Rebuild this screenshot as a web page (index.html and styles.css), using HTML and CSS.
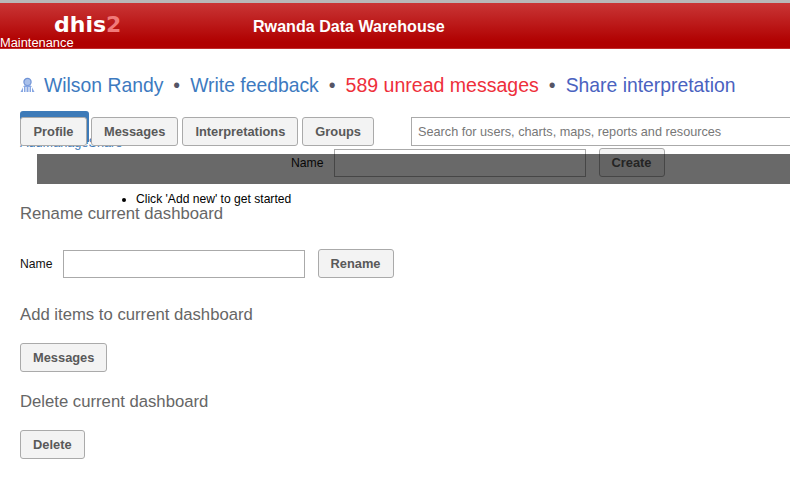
FILE: index.html
```html
<!DOCTYPE html>
<html lang="en">
<head>
    <meta charset="UTF-8">
    <title>Dashboard</title>
    <link rel="stylesheet" href="styles.css">
</head>
<body>
    <div class="header">
        <div class="logo">dhis<span class="logo-two">2</span></div>
        <div class="app-title">Rwanda Data Warehouse</div>
        <div class="maintenance">Maintenance</div>
    </div>

    <div class="interpretation-bar">
        <svg class="user-icon" width="15" height="16" viewBox="0 0 15 16">
            <circle cx="7.5" cy="5" r="3.6" fill="#a9c0ea" stroke="#6f93d6" stroke-width="1.2"/>
            <path d="M4 8.5h7l3.5 6.5h-14z" fill="#86a6e2"/>
            <path d="M3.5 10v5M6 10v5M9 10v5M11.5 10v5" stroke="#fff" stroke-width="1"/>
        </svg>
        <a class="link" href="#">Wilson Randy</a>
        <span class="sep">•</span>
        <a class="link" href="#">Write feedback</a>
        <span class="sep">•</span>
        <a class="link-red" href="#">589 unread messages</a>
        <span class="sep">•</span>
        <a class="link-purple" href="#">Share interpretation</a>
    </div>

    <div class="toolbar">
        <div class="tabs">
            <div class="tab-back"></div>
            <button class="button tab-button tab-active">Profile</button>
            <button class="button tab-button">Messages</button>
            <button class="button tab-button">Interpretations</button>
            <button class="button tab-button">Groups</button>
        </div>
        <input class="search" type="text" placeholder="Search for users, charts, maps, reports and resources">
    </div>

    <div class="hidden-links">Add<span>Manage</span><span>Share</span></div>

    <div class="create-form">
        <span class="small-label">Name</span>
        <input class="text-input" type="text">
        <button class="button">Create</button>
    </div>
    <div class="mask"></div>

    <ul class="hint">
        <li>Click 'Add new' to get started</li>
    </ul>

    <div class="content">
        <h3 class="section-title rename-title">Rename current dashboard</h3>
        <div class="form-row">
            <span class="small-label">Name</span>
            <input class="text-input" type="text">
            <button class="button">Rename</button>
        </div>

        <h3 class="section-title">Add items to current dashboard</h3>
        <button class="button">Messages</button>

        <h3 class="section-title">Delete current dashboard</h3>
        <button class="button">Delete</button>
    </div>
</body>
</html>
```

FILE: styles.css
```css
* {
    box-sizing: border-box;
}

html, body {
    overflow: hidden;
}

body {
    margin: 0;
    height: 485px;
    background: #fff;
    font-family: "Liberation Sans", Arial, sans-serif;
    position: relative;
}

.header {
    display: flex;
    align-items: center;
    height: 49px;
    position: relative;
    border-top: 3px solid #b9b9b9;
    background: linear-gradient(to bottom, #c93636 0%, #b00000 85%, #b00000 97%, #c44 100%);
    color: #fff;
}

.logo {
    width: 66px;
    margin-left: 54px;
    margin-bottom: 3px;
    font-family: "DejaVu Sans", sans-serif;
    font-size: 22px;
    font-weight: bold;
    line-height: 30px;
}

.logo-two {
    color: #f07a7a;
}

.app-title {
    margin-left: 133px;
    margin-bottom: 1px;
    font-size: 16.1px;
    font-weight: bold;
    line-height: 18px;
}

.maintenance {
    position: absolute;
    left: 0;
    top: 32px;
    font-size: 12.85px;
    line-height: 15px;
}

.interpretation-bar {
    display: flex;
    align-items: center;
    height: 30px;
    margin-top: 21px;
    padding-left: 20px;
    font-size: 19.35px;
}

.user-icon {
    margin-right: 9px;
}

.sep {
    margin: 0 10px;
    color: #556;
}

.link {
    color: #3d7ac0;
    text-decoration: none;
}

.link-red {
    color: #ee2f3b;
    font-size: 19.55px;
    text-decoration: none;
}

.link-purple {
    color: #4a62c0;
    text-decoration: none;
}

.toolbar {
    display: flex;
    margin-top: 17px;
    padding-left: 20px;
    height: 29px;
}

.tabs {
    display: flex;
    flex-shrink: 0;
    gap: 4px;
    position: relative;
    width: 391px;
}

.tab-back {
    position: absolute;
    left: 0;
    top: -6px;
    width: 69px;
    height: 31px;
    background: #3d7ab8;
    border-radius: 3px 3px 0 0;
}

.button {
    height: 29px;
    padding: 0 12px;
    background: #f3f3f3;
    border: 1px solid #aaa;
    border-radius: 3px;
    color: #595959;
    font-family: "Liberation Sans", Arial, sans-serif;
    font-size: 12.85px;
    font-weight: bold;
}

.tab-button {
    position: relative;
}

.tab-active {
    padding: 0 12.5px;
}

.search {
    width: 400px;
    height: 29px;
    padding: 0 6px;
    border: 1px solid #aaa;
    font-family: "Liberation Sans", Arial, sans-serif;
    font-size: 12.7px;
    flex-shrink: 0;
}

.search::placeholder {
    color: #777;
    opacity: 1;
}

.hidden-links {
    position: absolute;
    left: 20px;
    top: 136px;
    font-size: 12.7px;
    line-height: 14px;
    color: #3d7ab8;
    z-index: -1;
}

.create-form {
    display: flex;
    align-items: center;
    height: 29px;
    margin-top: 2px;
    padding-left: 291px;
}

.create-form .small-label {
    margin-right: 10px;
    margin-top: 1px;
}

.create-form .text-input {
    margin-right: 13px;
}

.mask {
    position: absolute;
    left: 37px;
    top: 154px;
    right: 0;
    height: 30px;
    background: rgba(0, 0, 0, 0.59);
}

.small-label {
    font-size: 12.2px;
    color: #111;
}

.text-input {
    width: 252px;
    height: 28px;
    border: 1px solid #aaa;
    background: #fff;
}

.hint {
    margin: 15px 0 0;
    padding-left: 136px;
    font-size: 12.1px;
    line-height: 14px;
    color: #000;
}

.content {
    margin-top: -2px;
    padding-left: 20px;
}

.section-title {
    margin: 0 0 18px;
    font-size: 16.7px;
    font-weight: normal;
    line-height: 20px;
    color: #666;
}

.rename-title {
    margin-bottom: 25px;
}

.form-row {
    display: flex;
    align-items: center;
    margin-bottom: 27px;
}

.form-row .small-label {
    margin-right: 10px;
}

.form-row .text-input {
    width: 242px;
    margin-right: 13px;
}

.content > .button {
    display: block;
    margin-bottom: 20px;
}
```
